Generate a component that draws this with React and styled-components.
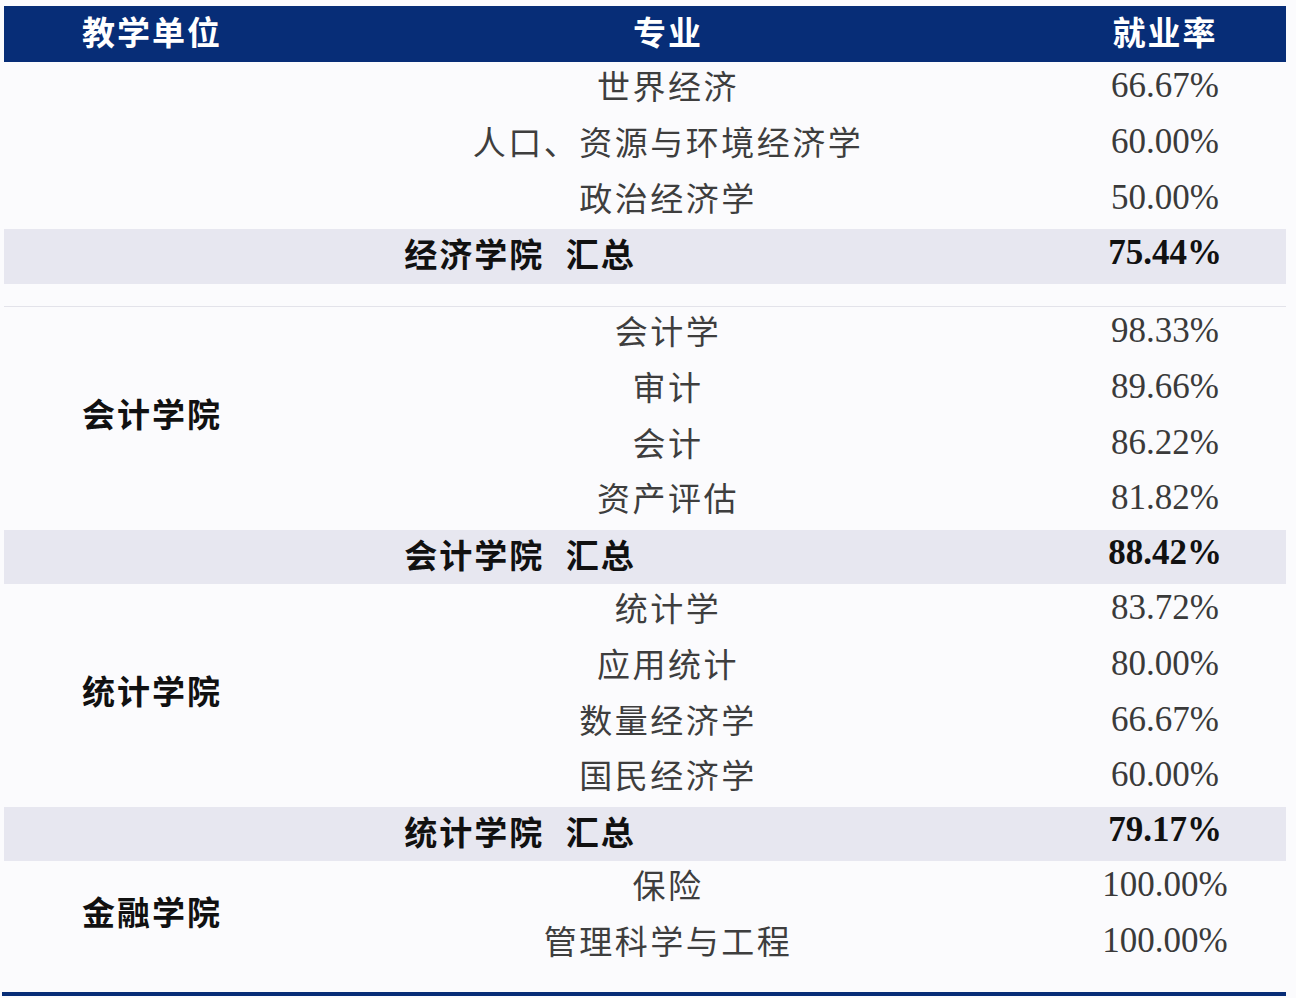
import React from 'react'
import styled, { createGlobalStyle } from 'styled-components'

const GlobalStyle = createGlobalStyle`
  html, body {
    margin: 0;
    padding: 0;
    background: #fbfbfd;
  }
  body {
    font-family: "Noto Sans CJK SC", "Noto Sans", sans-serif;
  }
`

const navy = '#072d77'
const band = '#e7e7f0'

const Page = styled.div`
  width: 1282px;
  padding: 6px 10px 2px 4px;
`

const HeaderRow = styled.div`
  display: grid;
  grid-template-columns: 296px 736px 1fr;
  height: 56px;
  background-color: ${navy};
`

const HeaderCell = styled.div`
  display: flex;
  align-items: center;
  justify-content: center;
  padding-bottom: 6px;
  padding-left: ${p => (p.$rate ? '8px' : '0')};
  color: #ffffff;
  font-size: 33px;
  font-weight: 700;
  letter-spacing: 2px;
`

const Group = styled.div`
  display: grid;
  grid-template-columns: 296px 736px 1fr;
  grid-auto-rows: 55.7px;
`

const College = styled.div`
  grid-column: 1;
  grid-row: 1 / span ${p => p.$span};
  display: flex;
  align-items: center;
  justify-content: center;
  padding-bottom: 10px;
  color: #111;
  font-size: 33px;
  font-weight: 700;
  letter-spacing: 2px;
`

const Major = styled.div`
  grid-column: 2;
  display: flex;
  align-items: center;
  justify-content: center;
  padding-bottom: 9px;
  color: #3e3e3e;
  font-size: 33px;
  font-weight: 400;
  letter-spacing: 2.5px;
`

const Rate = styled.div`
  grid-column: ${p => p.$col || 3};
  display: flex;
  align-items: center;
  justify-content: center;
  padding-left: 8px;
  padding-bottom: ${p => (p.$bold ? 10 : 7)}px;
  color: ${p => (p.$bold ? '#111' : '#3a3a3a')};
  font-family: "Liberation Serif", "Times New Roman", serif;
  font-size: 35px;
  font-weight: ${p => (p.$bold ? 700 : 400)};
`

const TotalRow = styled.div`
  display: grid;
  grid-template-columns: 1032px 1fr;
  height: ${p => p.$height}px;
  background-color: ${band};
`

const TotalLabel = styled.div`
  display: flex;
  align-items: center;
  justify-content: center;
  padding-bottom: 9px;
  color: #111;
  font-size: 33px;
  font-weight: 700;
  letter-spacing: 2px;
  word-spacing: 12px;
`

const Spacer = styled.div`
  height: 22px;
  border-bottom: 1px solid #e3e3ea;
`

const BottomRule = styled.div`
  margin-top: 20px;
  margin-left: -2px;
  height: 4px;
  background-color: ${navy};
`

const groups = [
  {
    college: '',
    rows: [
      ['世界经济', '66.67%'],
      ['人口、资源与环境经济学', '60.00%'],
      ['政治经济学', '50.00%'],
    ],
    total: { name: '经济学院', rate: '75.44%', height: 55 },
  },
  {
    college: '会计学院',
    rows: [
      ['会计学', '98.33%'],
      ['审计', '89.66%'],
      ['会计', '86.22%'],
      ['资产评估', '81.82%'],
    ],
    total: { name: '会计学院', rate: '88.42%', height: 54 },
  },
  {
    college: '统计学院',
    rows: [
      ['统计学', '83.72%'],
      ['应用统计', '80.00%'],
      ['数量经济学', '66.67%'],
      ['国民经济学', '60.00%'],
    ],
    total: { name: '统计学院', rate: '79.17%', height: 54 },
  },
  {
    college: '金融学院',
    rows: [
      ['保险', '100.00%'],
      ['管理科学与工程', '100.00%'],
    ],
  },
]

function CollegeGroup({ group, first }) {
  return (
    <>
      <Group>
        {group.college ? (
          <College $span={group.rows.length}>{group.college}</College>
        ) : null}
        {group.rows.map(([major, rate]) => (
          <React.Fragment key={major}>
            <Major>{major}</Major>
            <Rate>{rate}</Rate>
          </React.Fragment>
        ))}
      </Group>
      {group.total ? (
        <TotalRow $height={group.total.height}>
          <TotalLabel>{group.total.name} 汇总</TotalLabel>
          <Rate $col={2} $bold>{group.total.rate}</Rate>
        </TotalRow>
      ) : null}
      {first ? <Spacer /> : null}
    </>
  )
}

export default function App() {
  return (
    <Page>
      <GlobalStyle />
      <HeaderRow>
        <HeaderCell>教学单位</HeaderCell>
        <HeaderCell>专业</HeaderCell>
        <HeaderCell $rate>就业率</HeaderCell>
      </HeaderRow>
      {groups.map((g, i) => (
        <CollegeGroup key={i} group={g} first={i === 0} />
      ))}
      <BottomRule />
    </Page>
  )
}
